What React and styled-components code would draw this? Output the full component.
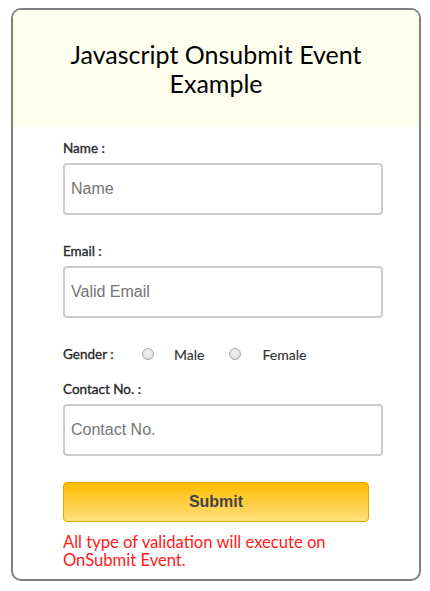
import React from "react";
import styled, { createGlobalStyle } from "styled-components";

const Global = createGlobalStyle`
  html, body { margin: 0; padding: 0; background: #ffffff; }
  body { font-family: "Lato", "Open Sans", sans-serif; }
  * { box-sizing: border-box; }
`;

const Card = styled.div`
  margin: 8px 0 0 11px;
  width: 410px;
  border: 2px solid #808080;
  border-radius: 10px;
  overflow: hidden;
  background: #ffffff;
`;

const Header = styled.div`
  height: 117px;
  background: #fffff0;
  display: flex;
  align-items: center;
  justify-content: center;
  padding: 0 40px;
`;

const Title = styled.h1`
  margin: 0;
  font-family: "Lato", sans-serif;
  font-weight: 400;
  font-size: 25px;
  line-height: 29px;
  color: #000000;
  text-align: center;
`;

const Form = styled.form`
  padding: 13px 24px 10px 50px;
  display: flex;
  flex-direction: column;
`;

const Field = styled.div`
  display: flex;
  flex-direction: column;
  margin-top: ${(p) => p.$top || 0}px;
`;

const Label = styled.label`
  font-family: "Lato", sans-serif;
  font-weight: 400;
  font-size: 13.5px;
  line-height: 16px;
  color: #2a2a2a;
  -webkit-text-stroke: 0.35px #2a2a2a;
  margin-bottom: 7px;
`;

const Input = styled.input`
  width: 320px;
  height: 52px;
  border: 2px solid #cccccc;
  border-radius: 4px;
  padding: 0 6px;
  font-family: "Liberation Sans", Arial, sans-serif;
  font-size: 16px;
  color: #333;
  outline: none;
  &::placeholder { color: #757575; }
`;

const GenderRow = styled.div`
  display: flex;
  align-items: center;
  height: 18px;
  margin-top: 27px;
`;

const GenderLabel = styled.span`
  font-family: "Lato", sans-serif;
  font-weight: 400;
  font-size: 13.5px;
  color: #2a2a2a;
  -webkit-text-stroke: 0.35px #2a2a2a;
  width: 79px;
`;

const Radio = styled.span`
  width: 12px;
  height: 12px;
  border-radius: 50%;
  border: 1px solid #a8a8a8;
  background: radial-gradient(circle at 50% 35%, #f4f4f4, #d8d8d8);
  margin-right: ${(p) => p.$gap}px;
  flex: none;
`;

const RadioText = styled.span`
  font-family: "Lato", sans-serif;
  font-weight: 400;
  font-size: 14px;
  color: #333333;
  -webkit-text-stroke: 0.15px #333333;
  margin-right: ${(p) => p.$gap || 0}px;
`;

const Button = styled.button`
  margin-top: 26px;
  width: 306px;
  height: 40px;
  border: 1px solid #e5a800;
  border-radius: 4px;
  background: linear-gradient(to bottom, #ffbb00 0%, #ffe07d 100%);
  font-family: "Liberation Sans", Arial, sans-serif;
  font-weight: 700;
  font-size: 16px;
  color: #444444;
  cursor: pointer;
`;

const Note = styled.p`
  margin: 11px 0 0 0;
  font-family: "Lato", sans-serif;
  font-weight: 400;
  font-size: 16.6px;
  line-height: 18px;
  color: #ff1a1a;
  width: 300px;
`;

export default function App() {
  return (
    <>
      <Global />
      <Card>
        <Header>
          <Title>Javascript Onsubmit Event Example</Title>
        </Header>
        <Form onSubmit={(e) => e.preventDefault()}>
          <Field>
            <Label>Name :</Label>
            <Input placeholder="Name" />
          </Field>
          <Field $top={28}>
            <Label>Email :</Label>
            <Input placeholder="Valid Email" />
          </Field>
          <GenderRow>
            <GenderLabel>Gender :</GenderLabel>
            <Radio $gap={20} />
            <RadioText $gap={25}>Male</RadioText>
            <Radio $gap={21} />
            <RadioText>Female</RadioText>
          </GenderRow>
          <Field $top={18}>
            <Label>Contact No. :</Label>
            <Input placeholder="Contact No." />
          </Field>
          <Button type="submit">Submit</Button>
          <Note>All type of validation will execute on OnSubmit Event.</Note>
        </Form>
      </Card>
    </>
  );
}
